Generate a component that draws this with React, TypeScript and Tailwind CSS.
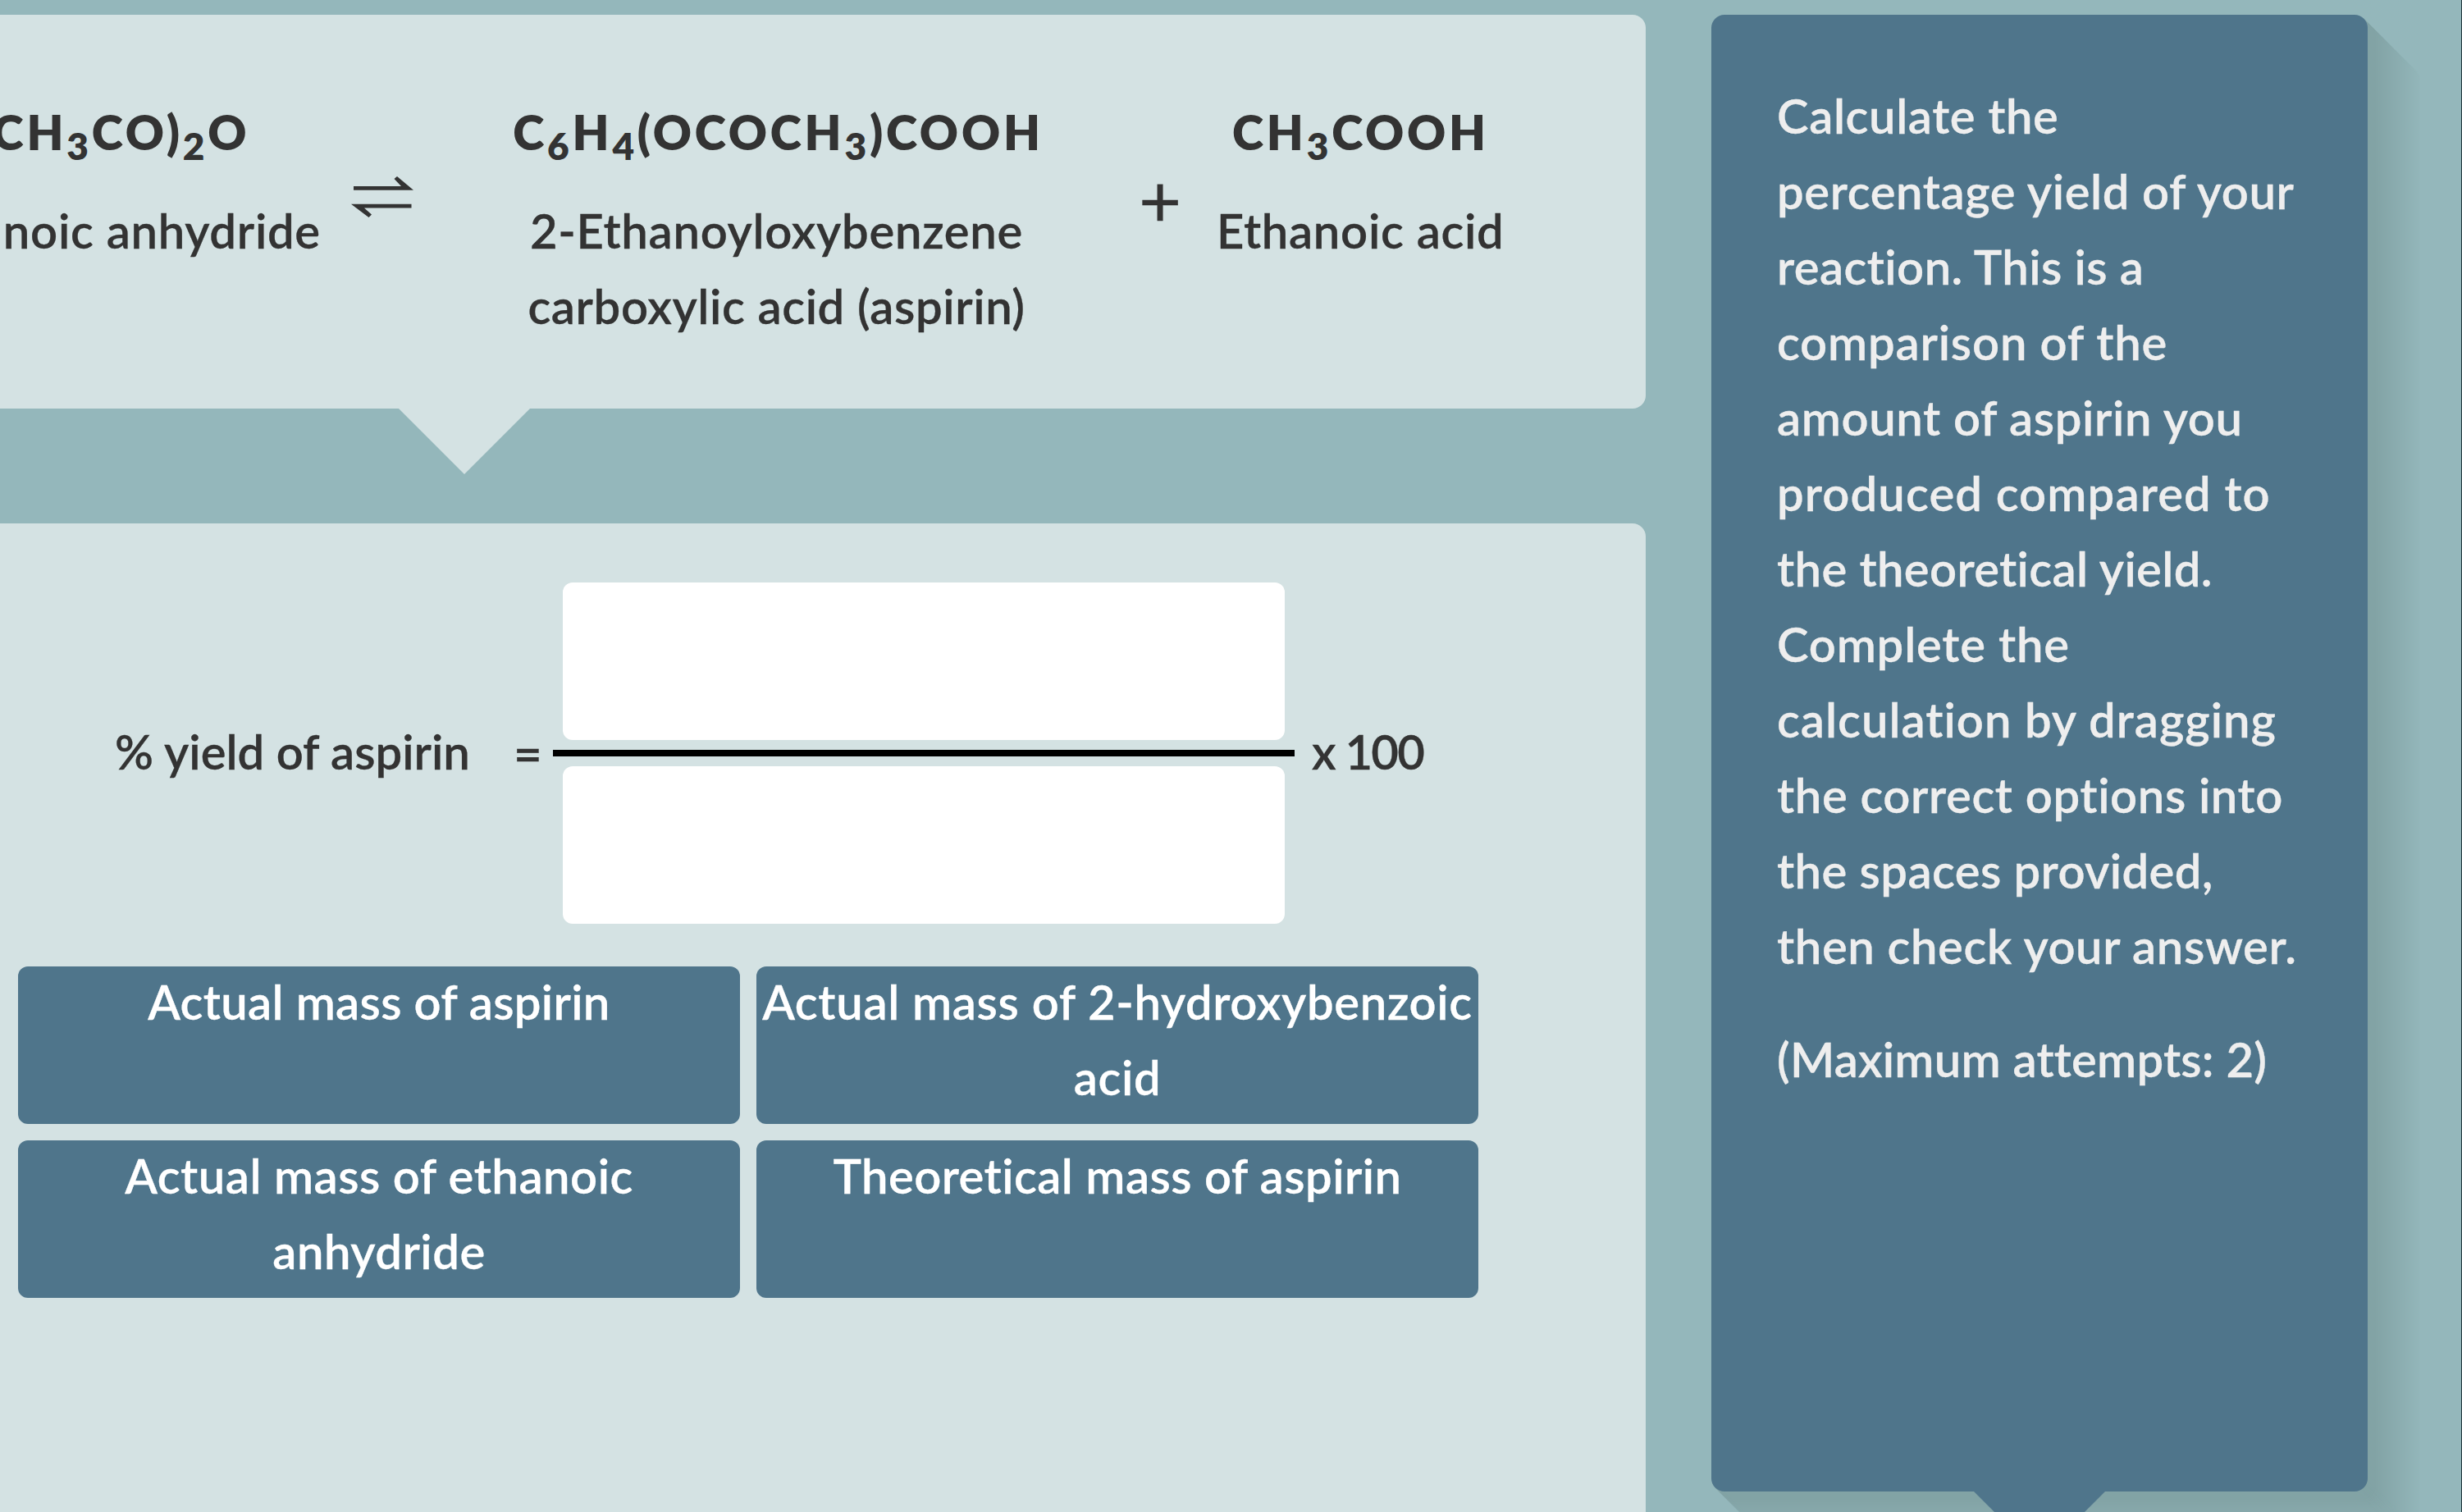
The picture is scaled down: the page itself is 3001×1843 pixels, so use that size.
import type { ReactNode } from 'react'
import clsx from 'clsx'

type Line = { text: string; tracking: string }

const tiles: Line[] = [
  { text: 'Actual mass of aspirin', tracking: 'tracking-[0.3px]' },
  { text: 'Actual mass of 2-hydroxybenzoic acid', tracking: 'tracking-[0.65px]' },
  { text: 'Actual mass of ethanoic anhydride', tracking: 'tracking-[0.5px]' },
  { text: 'Theoretical mass of aspirin', tracking: 'tracking-[0.45px]' },
]

const instructions: Line[] = [
  { text: 'Calculate the', tracking: 'tracking-[0.6px]' },
  { text: 'percentage yield of your', tracking: 'tracking-[0.6px]' },
  { text: 'reaction. This is a', tracking: 'tracking-[0.4px]' },
  { text: 'comparison of the', tracking: 'tracking-[0.8px]' },
  { text: 'amount of aspirin you', tracking: 'tracking-[0.6px]' },
  { text: 'produced compared to', tracking: 'tracking-[1.1px]' },
  { text: 'the theoretical yield.', tracking: 'tracking-[0.35px]' },
  { text: 'Complete the', tracking: 'tracking-[0.8px]' },
  { text: 'calculation by dragging', tracking: 'tracking-[1px]' },
  { text: 'the correct options into', tracking: 'tracking-[0.6px]' },
  { text: 'the spaces provided,', tracking: 'tracking-[0.4px]' },
  { text: 'then check your answer.', tracking: 'tracking-[0.6px]' },
]

// long 45deg shadow, solid for the first few steps and then fading into the page
const SHADOW_STEPS = 64
const longShadow = Array.from({ length: SHADOW_STEPS }, (_, i) => {
  const t = Math.max(0, (i - 8) / (SHADOW_STEPS - 5))
  const mix = (a: number, b: number) => Math.round(a + (b - a) * t)
  return `${i + 1}px ${i + 1}px 0 rgb(${mix(130, 148)}, ${mix(163, 183)}, ${mix(165, 187)})`
}).join(', ')

function Sub({ children }: { children: ReactNode }) {
  return <sub className="text-[46px]">{children}</sub>
}

function Formula({ children }: { children: ReactNode }) {
  return <div className="pl-1 font-extrabold tracking-[3.8px] [-webkit-text-stroke:0px]">{children}</div>
}

function Equilibrium() {
  return (
    <svg width="76" height="54" viewBox="0 0 76 54" fill="#333">
      <path d="M3 14h58L52.5 5l3.5-3L76 18.7H3z" />
      <path d="M73.5 40.5H16l9 8-3.5 3.5L0 35.8h73.5z" />
    </svg>
  )
}

function DropZone() {
  return <div className="h-48 w-[880px] rounded-xl bg-white" />
}

export default function App() {
  return (
    <div className="flex h-[1843px] w-[3001px] overflow-hidden border-r border-[#1f363c] bg-[#94b7bb] pt-[18px] font-['Lato',sans-serif] text-[58px] leading-[92px] font-semibold text-[#333] [-webkit-text-stroke:0.3px]">
      <main className="flex w-[2006px] shrink-0 flex-col">
        <section className="relative flex h-[480px] shrink-0 items-start rounded-r-2xl bg-[#d4e2e3] pt-[97px] text-center whitespace-nowrap">
          <div className="-ml-[114px] w-[500px] shrink-0">
            <Formula>
              (CH<Sub>3</Sub>CO)<Sub>2</Sub>O
            </Formula>
            <div className="mt-7 pr-[15px] tracking-[0.7px]">Ethanoic anhydride</div>
          </div>
          <div className="mt-[98px] ml-[42px] shrink-0">
            <Equilibrium />
          </div>
          <div className="ml-[112px] w-[661px] shrink-0">
            <Formula>
              C<Sub>6</Sub>H<Sub>4</Sub>(OCOCH<Sub>3</Sub>)COOH
            </Formula>
            <div className="mt-7 tracking-[0.7px]">2-Ethanoyloxybenzene</div>
            <div className="tracking-[0.6px]">carboxylic acid (aspirin)</div>
          </div>
          <div className="mt-[81px] ml-[93px] w-[88px] shrink-0 text-[90px] font-normal">+</div>
          <div className="ml-[26px] w-[345px] shrink-0">
            <Formula>
              CH<Sub>3</Sub>COOH
            </Formula>
            <div className="mt-7 -ml-px tracking-[0.7px]">Ethanoic acid</div>
          </div>
          <div className="absolute top-full left-[486px] h-20 w-40 bg-[#d4e2e3] [clip-path:polygon(0_0,100%_0,50%_100%)]" />
        </section>

        <section className="mt-[140px] flex-1 rounded-tr-2xl bg-[#d4e2e3] pt-[72px]">
          <div className="flex items-center whitespace-nowrap">
            <div className="mb-1 ml-[140px] w-[486px]">% yield of aspirin</div>
            <div className="w-[48px] text-[60px]">=</div>
            <div className="flex w-[904px] flex-col items-center">
              <DropZone />
              <div className="my-3 h-2 w-full bg-black" />
              <DropZone />
            </div>
            <div className="mb-1 ml-[21px] tracking-[-1.8px]">x 100</div>
          </div>

          <div className="mt-[52px] ml-[22px] grid w-[1780px] grid-cols-2 gap-5 text-center text-white">
            {tiles.map((t) => (
              <div key={t.text} className={clsx('h-48 rounded-xl bg-[#4f758b]', t.tracking)}>
                <div className="-mt-[3px]">{t.text}</div>
              </div>
            ))}
          </div>
        </section>
      </main>

      <aside
        className="relative ml-20 h-[1800px] w-[800px] shrink-0 rounded-2xl bg-[#4f758b] pt-[77px] pl-20 whitespace-nowrap text-[#eee]"
        style={{ boxShadow: longShadow }}
      >
        <p>
          {instructions.map((l) => (
            <span key={l.text} className={clsx('block', l.tracking)}>
              {l.text}
            </span>
          ))}
        </p>
        <p className="mt-[46px] tracking-[0.2px]">(Maximum attempts: 2)</p>
        <div className="absolute top-full left-80 h-20 w-40 bg-[#4f758b] [clip-path:polygon(0_0,100%_0,50%_100%)]" />
      </aside>
    </div>
  )
}
